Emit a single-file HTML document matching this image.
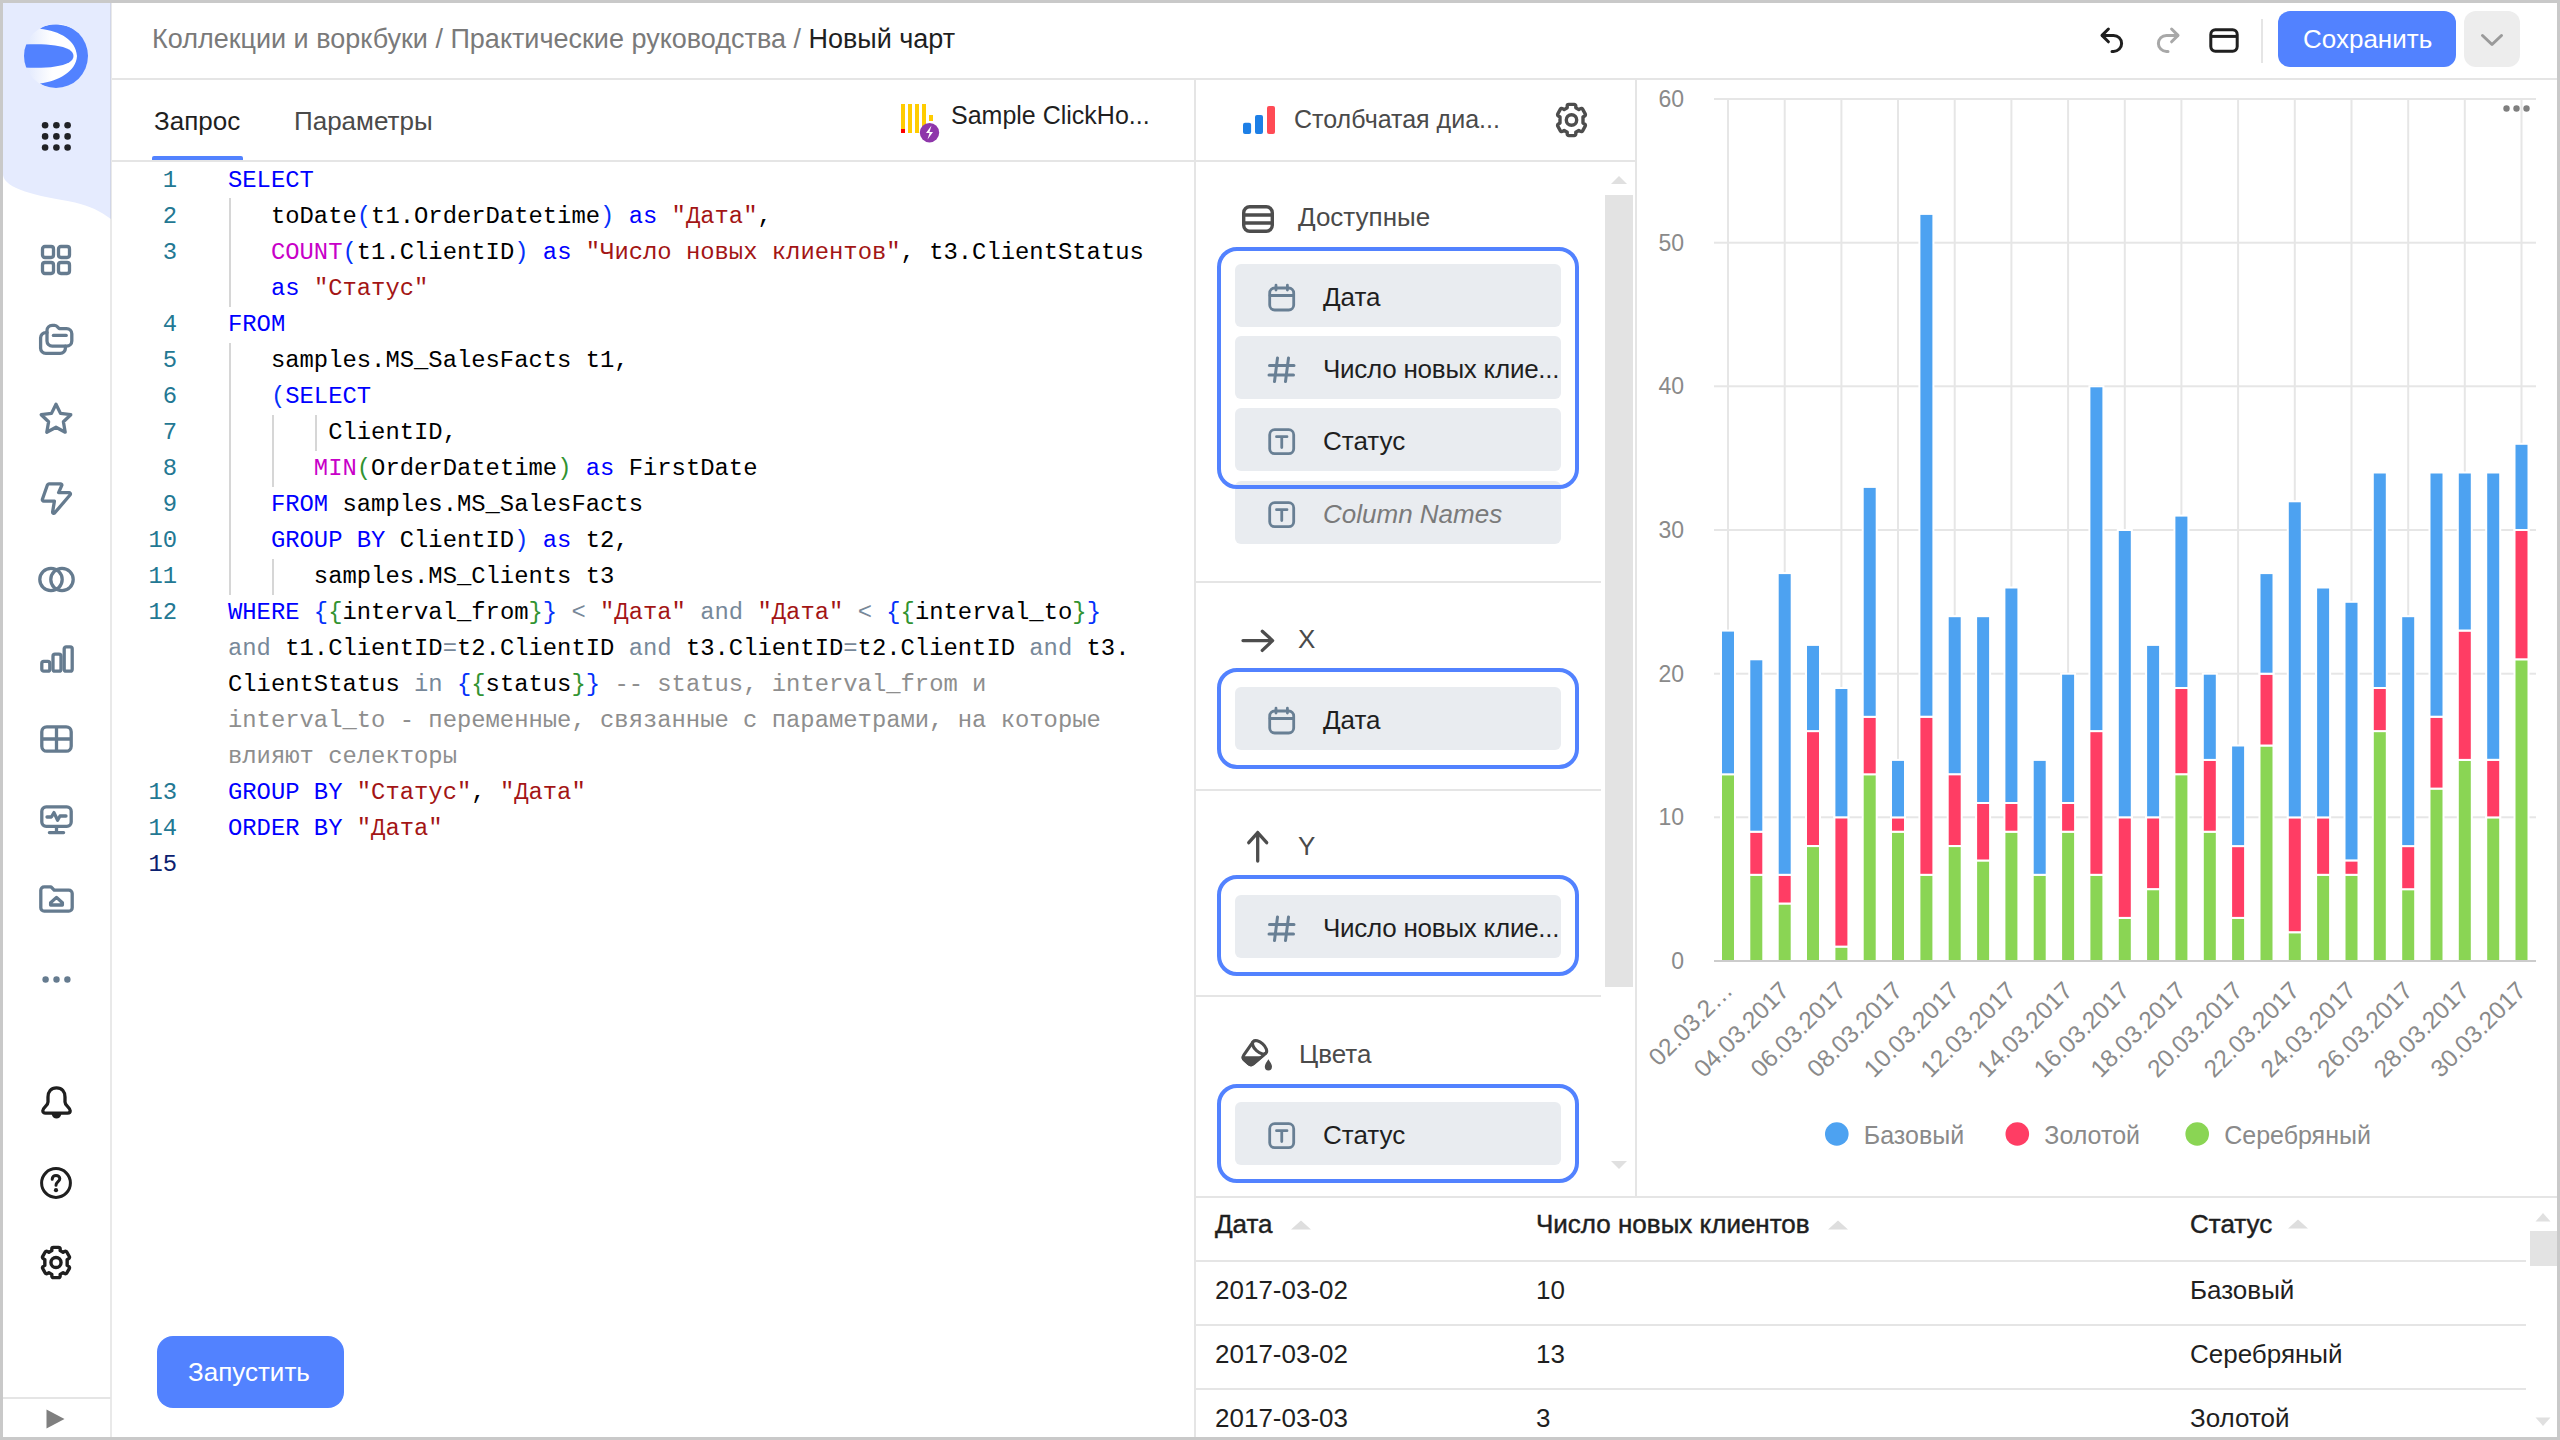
<!DOCTYPE html>
<html><head><meta charset="utf-8">
<style>
*{box-sizing:border-box;margin:0;padding:0}
html,body{width:2560px;height:1440px;overflow:hidden;background:#c9c9c9;font-family:"Liberation Sans",sans-serif;color:#1f1f1f}
#app{position:absolute;left:3px;top:3px;width:2554px;height:1434px;background:#fff;overflow:hidden}
.a{position:absolute}
.t{position:absolute;white-space:pre;line-height:1}
.ln{position:absolute;background:#e5e5e5}
svg{position:absolute;overflow:visible}
#code i{font-style:normal}
#code .k{color:#0000ff}#code .f{color:#c800c8}#code .s{color:#a31515}#code .o{color:#778899}#code .c{color:#8e8e8e}#code .b1{color:#0431fa}#code .b2{color:#319331}
#gut .cur{font-weight:normal;color:#0b216f}
.item{position:absolute;left:1235px;width:326px;height:63px;background:#e9ecf0;border-radius:6px}
.item .ic{position:absolute;left:33px;top:20px;width:28px;height:28px;overflow:visible}
.item span{position:absolute;left:88px;top:20px;font-size:26px;line-height:26px;white-space:pre;color:#1f1f1f}
#chart text{font-family:"Liberation Sans",sans-serif;fill:#8a8a8a}
#chart .yl{font-size:23px}#chart .xl{font-size:24.5px}#chart .lg{font-size:25px}
.th{font-size:26px;color:#1f1f1f;-webkit-text-stroke:0.45px #1f1f1f}
.td{font-size:26px;color:#1f1f1f}
</style></head><body>
<svg width="0" height="0" style="position:absolute">
<defs>
<g id="i-cal" fill="none" stroke="#687f94" stroke-width="2.8" stroke-linecap="round" stroke-linejoin="round"><rect x="1.7" y="4" width="24" height="22" rx="5"/><path d="M2 11.5 H25.5 M8 1.2 V6 M19.4 1.2 V6"/></g>
<g id="i-hash" fill="none" stroke="#687f94" stroke-width="3" stroke-linecap="round"><path d="M9.5 2 L6.5 25.5 M20.5 2 L17.5 25.5 M1.5 9.5 H26 M1 19 H25.5"/></g>
<g id="i-t" fill="none" stroke="#687f94" stroke-width="2.8" stroke-linejoin="round"><rect x="1.7" y="1.7" width="24" height="24" rx="5"/><path d="M8.5 8.7 H19 M13.75 8.7 V19.5" stroke-linecap="round" stroke-width="2.8"/></g>
</defs></svg>
<div id="app"></div>
<!-- all coordinates below are page coordinates -->
<div class="a" style="left:0;top:0;width:2560px;height:1440px">

<!-- SIDEBAR -->
<svg style="left:0;top:0" width="112" height="1440">
  <path d="M3 3 H111 V219 C100 211 90 206 75 202.5 C55 198.5 38 196 25 191.5 C12 187 4 182 3 175 Z" fill="#e5ebfe"/>
</svg>
<div class="ln" style="left:110px;top:3px;width:2px;height:1434px;background:rgba(0,0,0,0.085)"></div>
<!-- logo -->
<svg style="left:24px;top:24px" width="64" height="64" viewBox="0 0 64 64">
  <defs>
    <linearGradient id="lg" x1="0" y1="0" x2="1" y2="0">
      <stop offset="0" stop-color="#dfe7fd"/><stop offset="0.45" stop-color="#ffffff"/>
    </linearGradient>
    <clipPath id="lc"><circle cx="32" cy="32" r="32"/></clipPath>
  </defs>
  <circle cx="32" cy="32" r="32" fill="url(#lg)"/>
  <g clip-path="url(#lc)" fill="#5282ff">
    <path d="M16 4.75 C22 -1 42 -2 54 8 C70 22 68 48 52 60 C42 67 24 66 16 59.5 C34 57 52 48 53 32 C52 16 36 7 16 4.75 Z"/>
    <path d="M-2 20.6 C18 19.5 36 20.5 45 25.5 C51 29 51 35 45 38.5 C36 43.5 18 44.5 -2 43.4 Z"/>
  </g>
</svg>
<!-- apps dots -->
<svg style="left:40px;top:120px" width="33" height="33" viewBox="0 0 33 33" fill="#202226">
  <circle cx="5.1" cy="5.3" r="3.3"/><circle cx="16.4" cy="5.3" r="3.3"/><circle cx="27.6" cy="5.3" r="3.3"/>
  <circle cx="5.1" cy="16.4" r="3.3"/><circle cx="16.4" cy="16.4" r="3.3"/><circle cx="27.6" cy="16.4" r="3.3"/>
  <circle cx="5.1" cy="27.5" r="3.3"/><circle cx="16.4" cy="27.5" r="3.3"/><circle cx="27.6" cy="27.5" r="3.3"/>
</svg>
<!-- nav icons -->
<g></g>
<svg style="left:40px;top:244px" width="32" height="32" viewBox="0 0 16 16" fill="none" stroke="#657b8f" stroke-width="1.65" stroke-linejoin="round">
  <rect x="1.25" y="1.25" width="5.5" height="5.5" rx="1.2"/><rect x="9.25" y="1.25" width="5.5" height="5.5" rx="1.2"/>
  <rect x="1.25" y="9.25" width="5.5" height="5.5" rx="1.2"/><rect x="9.25" y="9.25" width="5.5" height="5.5" rx="1.2"/>
</svg>
<svg style="left:39px;top:323px" width="35" height="33" viewBox="0 0 17.5 16.5" fill="none" stroke="#657b8f" stroke-width="1.65" stroke-linejoin="round" stroke-linecap="round">
  <path d="M4 3.8 A2.6 2.6 0 0 1 6.6 1.2 H7.8 C8.6 1.2 9 1.6 9.5 2.2 L10.1 2.8 H13.8 A2.6 2.6 0 0 1 16.4 5.4 V9 A2.6 2.6 0 0 1 13.8 11.6 H6.6 A2.6 2.6 0 0 1 4 9 Z"/>
  <path d="M4 4.8 H3.4 A2.6 2.6 0 0 0 0.8 7.4 V12.6 A2.6 2.6 0 0 0 3.4 15.2 H10.6 A2.6 2.6 0 0 0 13.2 12.6 V11.6"/>
  <path d="M7.2 6.2 H13.6"/>
</svg>
<svg style="left:39px;top:402px" width="34" height="34" viewBox="0 0 17 17" fill="none" stroke="#657b8f" stroke-width="1.65" stroke-linejoin="round">
  <path d="M8.5 1.1 L10.75 5.7 L15.9 6.35 L12.2 9.9 L13.1 15.1 L8.5 12.6 L3.9 15.1 L4.8 9.9 L1.1 6.35 L6.25 5.7 Z"/>
</svg>
<svg style="left:40px;top:482px" width="33" height="34" viewBox="0 0 16.5 17" fill="none" stroke="#657b8f" stroke-width="1.65" stroke-linejoin="round">
  <path d="M4.5 0.9 H10.4 A0.6 0.6 0 0 1 10.9 1.7 L9.3 5.3 H14.6 A0.7 0.7 0 0 1 15.1 6.4 L7.3 15.5 A0.6 0.6 0 0 1 6.3 15 L7.2 9.6 H1.9 A0.8 0.8 0 0 1 1.2 8.6 L3.7 1.5 A0.9 0.9 0 0 1 4.5 0.9 Z"/>
</svg>
<svg style="left:38px;top:566px" width="37" height="27" viewBox="0 0 18.5 13.5" fill="none" stroke="#657b8f" stroke-width="1.65">
  <circle cx="6.5" cy="6.75" r="5.6"/><circle cx="12" cy="6.75" r="5.6"/>
</svg>
<svg style="left:40px;top:645px" width="34" height="28" viewBox="0 0 17 14" fill="none" stroke="#657b8f" stroke-width="1.65" stroke-linejoin="round">
  <rect x="0.9" y="8.2" width="4" height="4.9" rx="1"/><rect x="6.5" y="4.6" width="4" height="8.5" rx="1"/><rect x="12.1" y="0.9" width="4" height="12.2" rx="1"/>
</svg>
<svg style="left:40px;top:725px" width="33" height="28" viewBox="0 0 16.5 14" fill="none" stroke="#657b8f" stroke-width="1.65">
  <rect x="0.9" y="0.9" width="14.7" height="12.2" rx="2.5"/><path d="M8.25 1 V13 M1 7 H15.5"/>
</svg>
<svg style="left:40px;top:805px" width="33" height="30" viewBox="0 0 16.5 15" fill="none" stroke="#657b8f" stroke-width="1.65" stroke-linejoin="round" stroke-linecap="round">
  <rect x="0.9" y="0.9" width="14.7" height="9.8" rx="2.2"/><path d="M3.5 6 H5.7 L7 3.8 L8.8 7.6 L10 5.5 H13"/><path d="M8.25 10.8 V13.8 M4.7 13.8 H11.8"/>
</svg>
<svg style="left:39px;top:885px" width="35" height="28" viewBox="0 0 17.5 14" fill="none" stroke="#657b8f" stroke-width="1.65" stroke-linejoin="round">
  <path d="M0.9 2.6 A1.7 1.7 0 0 1 2.6 0.9 H6 L7.6 2.6 H14.9 A1.7 1.7 0 0 1 16.6 4.3 V11.4 A1.7 1.7 0 0 1 14.9 13.1 H2.6 A1.7 1.7 0 0 1 0.9 11.4 Z"/>
  <path d="M5.8 10 V8.9 L8.75 6.2 L11.7 8.9 V10 Z"/>
</svg>
<svg style="left:41px;top:974px" width="31" height="11" viewBox="0 0 31 11" fill="#657b8f">
  <circle cx="4.6" cy="5.5" r="3.2"/><circle cx="15.5" cy="5.5" r="3.2"/><circle cx="26.4" cy="5.5" r="3.2"/>
</svg>
<!-- bottom icons -->
<svg style="left:41px;top:1086px" width="31" height="33" viewBox="0 0 15.5 16.5" fill="none" stroke="#1f1f1f" stroke-width="1.65" stroke-linejoin="round">
  <path d="M7.75 0.9 C10.6 0.9 12 3 12 5.5 V8 C12 10 14.6 10.6 14.6 12.4 C14.6 13.2 14 13.6 13.3 13.6 H2.2 C1.5 13.6 0.9 13.2 0.9 12.4 C0.9 10.6 3.5 10 3.5 8 V5.5 C3.5 3 4.9 0.9 7.75 0.9 Z"/>
  <path d="M6.2 14.2 A1.6 1.6 0 0 0 9.3 14.2 Z" fill="#1f1f1f"/>
</svg>
<svg style="left:40px;top:1167px" width="32" height="32" viewBox="0 0 16 16" fill="none" stroke="#1f1f1f" stroke-width="1.5" stroke-linecap="round">
  <circle cx="8" cy="8" r="7.2"/><path d="M6.1 6.1 C6.1 4.9 7 4.2 8 4.2 C9.1 4.2 9.9 4.9 9.9 5.9 C9.9 7.2 8 7.5 8 9.1"/><circle cx="8" cy="11.6" r="1.05" fill="#1f1f1f" stroke="none"/>
</svg>
<svg style="left:39px;top:1245px" width="34" height="35" viewBox="0 0 17.5 18" fill="none" stroke="#1f1f1f" stroke-width="1.75" stroke-linejoin="round">
  <path d="M7.4 1.2 H10.1 A0.8 0.8 0 0 1 10.9 2 V2.9 L12.4 3.8 L13.2 3.3 A0.8 0.8 0 0 1 14.3 3.6 L15.6 5.9 A0.8 0.8 0 0 1 15.3 7 L14.5 7.5 V10.5 L15.3 11 A0.8 0.8 0 0 1 15.6 12.1 L14.3 14.4 A0.8 0.8 0 0 1 13.2 14.7 L12.4 14.2 L10.9 15.1 V16 A0.8 0.8 0 0 1 10.1 16.8 H7.4 A0.8 0.8 0 0 1 6.6 16 V15.1 L5.1 14.2 L4.3 14.7 A0.8 0.8 0 0 1 3.2 14.4 L1.9 12.1 A0.8 0.8 0 0 1 2.2 11 L3 10.5 V7.5 L2.2 7 A0.8 0.8 0 0 1 1.9 5.9 L3.2 3.6 A0.8 0.8 0 0 1 4.3 3.3 L5.1 3.8 L6.6 2.9 V2 A0.8 0.8 0 0 1 7.4 1.2 Z"/>
  <circle cx="8.75" cy="9" r="2.6"/>
</svg>
<svg style="left:46px;top:1409px" width="19" height="20" viewBox="0 0 19 20" fill="#7f7f7f"><path d="M0.5 0.5 L18.5 10 L0.5 19.5 Z"/></svg>
<div class="ln" style="left:3px;top:1397px;width:108px;height:2px"></div>

<!-- HEADER -->
<div class="ln" style="left:112px;top:78px;width:2445px;height:2px"></div>
<svg style="left:2100px;top:27px" width="24" height="26" viewBox="0 0 12 13" fill="none" stroke="#1f1f1f" stroke-width="1.5" stroke-linecap="round" stroke-linejoin="round">
  <path d="M4.2 1 L1 4.2 L4.2 7.4"/><path d="M1.2 4.2 H6.8 A4 4 0 0 1 6.8 12.2 H6"/>
</svg>
<svg style="left:2156px;top:27px" width="24" height="26" viewBox="0 0 12 13" fill="none" stroke="#a8a8a8" stroke-width="1.5" stroke-linecap="round" stroke-linejoin="round">
  <path d="M7.8 1 L11 4.2 L7.8 7.4"/><path d="M10.8 4.2 H5.2 A4 4 0 0 0 5.2 12.2 H6"/>
</svg>
<svg style="left:2209px;top:28px" width="30" height="25" viewBox="0 0 15 12.5" fill="none" stroke="#1f1f1f" stroke-width="1.5">
  <rect x="0.9" y="0.9" width="13.2" height="10.7" rx="2.3"/><path d="M1 4.2 H14"/>
</svg>
<div class="ln" style="left:2261px;top:19px;width:2px;height:44px"></div>
<div class="a" style="left:2278px;top:11px;width:178px;height:56px;background:#5282ff;border-radius:12px"></div>
<div class="t" style="left:2303px;top:26px;font-size:26px;color:#fff">Сохранить</div>
<div class="a" style="left:2464px;top:11px;width:56px;height:56px;background:#ededed;border-radius:12px"></div>
<svg style="left:2481px;top:34px" width="22" height="12" viewBox="0 0 22 12" fill="none" stroke="#9a9a9a" stroke-width="3" stroke-linecap="round" stroke-linejoin="round"><path d="M1.5 1.5 L11 10.5 L20.5 1.5"/></svg>
<div class="t" id="bc" style="left:152px;top:26px;font-size:27px;color:#7a7a7a">Коллекции и воркбуки / Практические руководства / <span style="color:#1f1f1f">Новый чарт</span></div>

<!-- EDITOR PANEL -->
<div class="ln" style="left:112px;top:160px;width:1082px;height:2px"></div>
<div class="a" style="left:152px;top:156px;width:91px;height:4px;background:#5282ff;border-radius:2px 2px 0 0"></div>
<div class="t" style="left:154px;top:108px;font-size:26px;color:#1f1f1f">Запрос</div>
<div class="t" style="left:294px;top:108px;font-size:26px;color:#4a4a4a">Параметры</div>
<svg style="left:900px;top:103px" width="40" height="40" viewBox="0 0 40 40">
  <g fill="#ffcc00"><rect x="1" y="1" width="4" height="29"/><rect x="8" y="1" width="4" height="29"/><rect x="15" y="1" width="4" height="29"/><rect x="22" y="1" width="4" height="29"/><rect x="29" y="12" width="4" height="6"/></g>
  <rect x="1" y="26" width="4" height="4" fill="#ff0000"/>
  <circle cx="29.5" cy="29.7" r="9.7" fill="#8e36aa"/>
  <path d="M31.5 22.5 L26 30 H29.5 L27.5 36.5 L33 29 H29.5 Z" fill="#fff"/>
</svg>
<div class="t" style="left:951px;top:103px;font-size:25px;color:#1f1f1f">Sample ClickHo...</div>
<div class="ln" style="left:1194px;top:80px;width:2px;height:1357px"></div>

<div class="ln" style="left:229px;top:198px;width:2px;height:109px;background:#d6d6d6"></div>
<div class="ln" style="left:229px;top:343px;width:2px;height:252px;background:#d6d6d6"></div>
<div class="ln" style="left:272px;top:415px;width:2px;height:72px;background:#d6d6d6"></div>
<div class="ln" style="left:272px;top:559px;width:2px;height:36px;background:#d6d6d6"></div>
<div class="ln" style="left:315px;top:415px;width:2px;height:36px;background:#d6d6d6"></div>
<div class="a" id="gut" style="left:112px;top:163px;width:65px;font-family:'Liberation Mono',monospace;font-size:23.85px;line-height:36px;color:#237893;text-align:right;white-space:pre">1
2
3

4
5
6
7
8
9
10
11
12




13
14
<b class="cur">15</b></div>
<div class="a" id="code" style="left:228px;top:163px;font-family:'Liberation Mono',monospace;font-size:23.85px;line-height:36px;color:#000;white-space:pre"><i class="k">SELECT</i>
   toDate<i class="b1">(</i>t1.OrderDatetime<i class="b1">)</i> <i class="k">as</i> <i class="s">"Дата"</i>,
   <i class="f">COUNT</i><i class="b1">(</i>t1.ClientID<i class="b1">)</i> <i class="k">as</i> <i class="s">"Число новых клиентов"</i>, t3.ClientStatus
   <i class="k">as</i> <i class="s">"Статус"</i>
<i class="k">FROM</i>
   samples.MS_SalesFacts t1,
   <i class="b1">(</i><i class="k">SELECT</i>
       ClientID,
      <i class="f">MIN</i><i class="b2">(</i>OrderDatetime<i class="b2">)</i> <i class="k">as</i> FirstDate
   <i class="k">FROM</i> samples.MS_SalesFacts
   <i class="k">GROUP BY</i> ClientID<i class="b1">)</i> <i class="k">as</i> t2,
      samples.MS_Clients t3
<i class="k">WHERE</i> <i class="b1">{</i><i class="b2">{</i>interval_from<i class="b2">}</i><i class="b1">}</i> <i class="o">&lt;</i> <i class="s">"Дата"</i> <i class="o">and</i> <i class="s">"Дата"</i> <i class="o">&lt;</i> <i class="b1">{</i><i class="b2">{</i>interval_to<i class="b2">}</i><i class="b1">}</i>
<i class="o">and</i> t1.ClientID<i class="o">=</i>t2.ClientID <i class="o">and</i> t3.ClientID<i class="o">=</i>t2.ClientID <i class="o">and</i> t3.
ClientStatus <i class="o">in</i> <i class="b1">{</i><i class="b2">{</i>status<i class="b2">}</i><i class="b1">}</i> <i class="c">-- status, interval_from и</i>
<i class="c">interval_to - переменные, связанные с параметрами, на которые</i>
<i class="c">влияют селекторы</i>
<i class="k">GROUP BY</i> <i class="s">"Статус"</i>, <i class="s">"Дата"</i>
<i class="k">ORDER BY</i> <i class="s">"Дата"</i>
</div>

<div class="a" style="left:157px;top:1336px;width:187px;height:72px;background:#5282ff;border-radius:16px"></div>
<div class="t" style="left:188px;top:1359px;font-size:26px;color:#fff">Запустить</div>

<!-- CHART -->
<svg id="chart" style="left:0;top:0" width="2560" height="1440" viewBox="0 0 2560 1440">
<rect x="1714" y="816.3" width="822" height="2" fill="#e6e6e6"/>
<rect x="1714" y="672.7" width="822" height="2" fill="#e6e6e6"/>
<rect x="1714" y="529.0" width="822" height="2" fill="#e6e6e6"/>
<rect x="1714" y="385.3" width="822" height="2" fill="#e6e6e6"/>
<rect x="1714" y="241.7" width="822" height="2" fill="#e6e6e6"/>
<rect x="1714" y="98.0" width="822" height="2" fill="#e6e6e6"/>
<rect x="1727.0" y="98.0" width="2" height="863.0" fill="#e6e6e6"/>
<rect x="1783.7" y="98.0" width="2" height="863.0" fill="#e6e6e6"/>
<rect x="1840.4" y="98.0" width="2" height="863.0" fill="#e6e6e6"/>
<rect x="1897.0" y="98.0" width="2" height="863.0" fill="#e6e6e6"/>
<rect x="1953.7" y="98.0" width="2" height="863.0" fill="#e6e6e6"/>
<rect x="2010.4" y="98.0" width="2" height="863.0" fill="#e6e6e6"/>
<rect x="2067.1" y="98.0" width="2" height="863.0" fill="#e6e6e6"/>
<rect x="2123.8" y="98.0" width="2" height="863.0" fill="#e6e6e6"/>
<rect x="2180.4" y="98.0" width="2" height="863.0" fill="#e6e6e6"/>
<rect x="2237.1" y="98.0" width="2" height="863.0" fill="#e6e6e6"/>
<rect x="2293.8" y="98.0" width="2" height="863.0" fill="#e6e6e6"/>
<rect x="2350.5" y="98.0" width="2" height="863.0" fill="#e6e6e6"/>
<rect x="2407.2" y="98.0" width="2" height="863.0" fill="#e6e6e6"/>
<rect x="2463.8" y="98.0" width="2" height="863.0" fill="#e6e6e6"/>
<rect x="2520.5" y="98.0" width="2" height="863.0" fill="#e6e6e6"/>
<rect x="1721.0" y="774.2" width="14" height="186.8" fill="#8ad554" stroke="#fff" stroke-width="2"/>
<rect x="1721.0" y="630.6" width="14" height="143.7" fill="#4da2f1" stroke="#fff" stroke-width="2"/>
<rect x="1749.3" y="874.8" width="14" height="86.2" fill="#8ad554" stroke="#fff" stroke-width="2"/>
<rect x="1749.3" y="831.7" width="14" height="43.1" fill="#ff3d64" stroke="#fff" stroke-width="2"/>
<rect x="1749.3" y="659.3" width="14" height="172.4" fill="#4da2f1" stroke="#fff" stroke-width="2"/>
<rect x="1777.7" y="903.5" width="14" height="57.5" fill="#8ad554" stroke="#fff" stroke-width="2"/>
<rect x="1777.7" y="874.8" width="14" height="28.7" fill="#ff3d64" stroke="#fff" stroke-width="2"/>
<rect x="1777.7" y="573.1" width="14" height="301.7" fill="#4da2f1" stroke="#fff" stroke-width="2"/>
<rect x="1806.0" y="846.1" width="14" height="114.9" fill="#8ad554" stroke="#fff" stroke-width="2"/>
<rect x="1806.0" y="731.1" width="14" height="114.9" fill="#ff3d64" stroke="#fff" stroke-width="2"/>
<rect x="1806.0" y="644.9" width="14" height="86.2" fill="#4da2f1" stroke="#fff" stroke-width="2"/>
<rect x="1834.4" y="946.6" width="14" height="14.4" fill="#8ad554" stroke="#fff" stroke-width="2"/>
<rect x="1834.4" y="817.3" width="14" height="129.3" fill="#ff3d64" stroke="#fff" stroke-width="2"/>
<rect x="1834.4" y="688.0" width="14" height="129.3" fill="#4da2f1" stroke="#fff" stroke-width="2"/>
<rect x="1862.7" y="774.2" width="14" height="186.8" fill="#8ad554" stroke="#fff" stroke-width="2"/>
<rect x="1862.7" y="716.8" width="14" height="57.5" fill="#ff3d64" stroke="#fff" stroke-width="2"/>
<rect x="1862.7" y="486.9" width="14" height="229.9" fill="#4da2f1" stroke="#fff" stroke-width="2"/>
<rect x="1891.0" y="831.7" width="14" height="129.3" fill="#8ad554" stroke="#fff" stroke-width="2"/>
<rect x="1891.0" y="817.3" width="14" height="14.4" fill="#ff3d64" stroke="#fff" stroke-width="2"/>
<rect x="1891.0" y="759.9" width="14" height="57.5" fill="#4da2f1" stroke="#fff" stroke-width="2"/>
<rect x="1919.4" y="874.8" width="14" height="86.2" fill="#8ad554" stroke="#fff" stroke-width="2"/>
<rect x="1919.4" y="716.8" width="14" height="158.0" fill="#ff3d64" stroke="#fff" stroke-width="2"/>
<rect x="1919.4" y="213.9" width="14" height="502.8" fill="#4da2f1" stroke="#fff" stroke-width="2"/>
<rect x="1947.7" y="846.1" width="14" height="114.9" fill="#8ad554" stroke="#fff" stroke-width="2"/>
<rect x="1947.7" y="774.2" width="14" height="71.8" fill="#ff3d64" stroke="#fff" stroke-width="2"/>
<rect x="1947.7" y="616.2" width="14" height="158.0" fill="#4da2f1" stroke="#fff" stroke-width="2"/>
<rect x="1976.1" y="860.4" width="14" height="100.6" fill="#8ad554" stroke="#fff" stroke-width="2"/>
<rect x="1976.1" y="803.0" width="14" height="57.5" fill="#ff3d64" stroke="#fff" stroke-width="2"/>
<rect x="1976.1" y="616.2" width="14" height="186.8" fill="#4da2f1" stroke="#fff" stroke-width="2"/>
<rect x="2004.4" y="831.7" width="14" height="129.3" fill="#8ad554" stroke="#fff" stroke-width="2"/>
<rect x="2004.4" y="803.0" width="14" height="28.7" fill="#ff3d64" stroke="#fff" stroke-width="2"/>
<rect x="2004.4" y="587.5" width="14" height="215.5" fill="#4da2f1" stroke="#fff" stroke-width="2"/>
<rect x="2032.7" y="874.8" width="14" height="86.2" fill="#8ad554" stroke="#fff" stroke-width="2"/>
<rect x="2032.7" y="759.9" width="14" height="114.9" fill="#4da2f1" stroke="#fff" stroke-width="2"/>
<rect x="2061.1" y="831.7" width="14" height="129.3" fill="#8ad554" stroke="#fff" stroke-width="2"/>
<rect x="2061.1" y="803.0" width="14" height="28.7" fill="#ff3d64" stroke="#fff" stroke-width="2"/>
<rect x="2061.1" y="673.7" width="14" height="129.3" fill="#4da2f1" stroke="#fff" stroke-width="2"/>
<rect x="2089.4" y="874.8" width="14" height="86.2" fill="#8ad554" stroke="#fff" stroke-width="2"/>
<rect x="2089.4" y="731.1" width="14" height="143.7" fill="#ff3d64" stroke="#fff" stroke-width="2"/>
<rect x="2089.4" y="386.3" width="14" height="344.8" fill="#4da2f1" stroke="#fff" stroke-width="2"/>
<rect x="2117.8" y="917.9" width="14" height="43.1" fill="#8ad554" stroke="#fff" stroke-width="2"/>
<rect x="2117.8" y="817.3" width="14" height="100.6" fill="#ff3d64" stroke="#fff" stroke-width="2"/>
<rect x="2117.8" y="530.0" width="14" height="287.3" fill="#4da2f1" stroke="#fff" stroke-width="2"/>
<rect x="2146.1" y="889.2" width="14" height="71.8" fill="#8ad554" stroke="#fff" stroke-width="2"/>
<rect x="2146.1" y="817.3" width="14" height="71.8" fill="#ff3d64" stroke="#fff" stroke-width="2"/>
<rect x="2146.1" y="644.9" width="14" height="172.4" fill="#4da2f1" stroke="#fff" stroke-width="2"/>
<rect x="2174.4" y="774.2" width="14" height="186.8" fill="#8ad554" stroke="#fff" stroke-width="2"/>
<rect x="2174.4" y="688.0" width="14" height="86.2" fill="#ff3d64" stroke="#fff" stroke-width="2"/>
<rect x="2174.4" y="515.6" width="14" height="172.4" fill="#4da2f1" stroke="#fff" stroke-width="2"/>
<rect x="2202.8" y="831.7" width="14" height="129.3" fill="#8ad554" stroke="#fff" stroke-width="2"/>
<rect x="2202.8" y="759.9" width="14" height="71.8" fill="#ff3d64" stroke="#fff" stroke-width="2"/>
<rect x="2202.8" y="673.7" width="14" height="86.2" fill="#4da2f1" stroke="#fff" stroke-width="2"/>
<rect x="2231.1" y="917.9" width="14" height="43.1" fill="#8ad554" stroke="#fff" stroke-width="2"/>
<rect x="2231.1" y="846.1" width="14" height="71.8" fill="#ff3d64" stroke="#fff" stroke-width="2"/>
<rect x="2231.1" y="745.5" width="14" height="100.6" fill="#4da2f1" stroke="#fff" stroke-width="2"/>
<rect x="2259.5" y="745.5" width="14" height="215.5" fill="#8ad554" stroke="#fff" stroke-width="2"/>
<rect x="2259.5" y="673.7" width="14" height="71.8" fill="#ff3d64" stroke="#fff" stroke-width="2"/>
<rect x="2259.5" y="573.1" width="14" height="100.6" fill="#4da2f1" stroke="#fff" stroke-width="2"/>
<rect x="2287.8" y="932.3" width="14" height="28.7" fill="#8ad554" stroke="#fff" stroke-width="2"/>
<rect x="2287.8" y="817.3" width="14" height="114.9" fill="#ff3d64" stroke="#fff" stroke-width="2"/>
<rect x="2287.8" y="501.3" width="14" height="316.1" fill="#4da2f1" stroke="#fff" stroke-width="2"/>
<rect x="2316.1" y="874.8" width="14" height="86.2" fill="#8ad554" stroke="#fff" stroke-width="2"/>
<rect x="2316.1" y="817.3" width="14" height="57.5" fill="#ff3d64" stroke="#fff" stroke-width="2"/>
<rect x="2316.1" y="587.5" width="14" height="229.9" fill="#4da2f1" stroke="#fff" stroke-width="2"/>
<rect x="2344.5" y="874.8" width="14" height="86.2" fill="#8ad554" stroke="#fff" stroke-width="2"/>
<rect x="2344.5" y="860.4" width="14" height="14.4" fill="#ff3d64" stroke="#fff" stroke-width="2"/>
<rect x="2344.5" y="601.8" width="14" height="258.6" fill="#4da2f1" stroke="#fff" stroke-width="2"/>
<rect x="2372.8" y="731.1" width="14" height="229.9" fill="#8ad554" stroke="#fff" stroke-width="2"/>
<rect x="2372.8" y="688.0" width="14" height="43.1" fill="#ff3d64" stroke="#fff" stroke-width="2"/>
<rect x="2372.8" y="472.5" width="14" height="215.5" fill="#4da2f1" stroke="#fff" stroke-width="2"/>
<rect x="2401.2" y="889.2" width="14" height="71.8" fill="#8ad554" stroke="#fff" stroke-width="2"/>
<rect x="2401.2" y="846.1" width="14" height="43.1" fill="#ff3d64" stroke="#fff" stroke-width="2"/>
<rect x="2401.2" y="616.2" width="14" height="229.9" fill="#4da2f1" stroke="#fff" stroke-width="2"/>
<rect x="2429.5" y="788.6" width="14" height="172.4" fill="#8ad554" stroke="#fff" stroke-width="2"/>
<rect x="2429.5" y="716.8" width="14" height="71.8" fill="#ff3d64" stroke="#fff" stroke-width="2"/>
<rect x="2429.5" y="472.5" width="14" height="244.2" fill="#4da2f1" stroke="#fff" stroke-width="2"/>
<rect x="2457.8" y="759.9" width="14" height="201.1" fill="#8ad554" stroke="#fff" stroke-width="2"/>
<rect x="2457.8" y="630.6" width="14" height="129.3" fill="#ff3d64" stroke="#fff" stroke-width="2"/>
<rect x="2457.8" y="472.5" width="14" height="158.0" fill="#4da2f1" stroke="#fff" stroke-width="2"/>
<rect x="2486.2" y="817.3" width="14" height="143.7" fill="#8ad554" stroke="#fff" stroke-width="2"/>
<rect x="2486.2" y="759.9" width="14" height="57.5" fill="#ff3d64" stroke="#fff" stroke-width="2"/>
<rect x="2486.2" y="472.5" width="14" height="287.3" fill="#4da2f1" stroke="#fff" stroke-width="2"/>
<rect x="2514.5" y="659.3" width="14" height="301.7" fill="#8ad554" stroke="#fff" stroke-width="2"/>
<rect x="2514.5" y="530.0" width="14" height="129.3" fill="#ff3d64" stroke="#fff" stroke-width="2"/>
<rect x="2514.5" y="443.8" width="14" height="86.2" fill="#4da2f1" stroke="#fff" stroke-width="2"/>
<rect x="1714" y="960.0" width="822" height="2" fill="#cccccc"/>
<text x="1684" y="969.0" text-anchor="end" class="yl">0</text>
<text x="1684" y="825.3" text-anchor="end" class="yl">10</text>
<text x="1684" y="681.7" text-anchor="end" class="yl">20</text>
<text x="1684" y="538.0" text-anchor="end" class="yl">30</text>
<text x="1684" y="394.3" text-anchor="end" class="yl">40</text>
<text x="1684" y="250.7" text-anchor="end" class="yl">50</text>
<text x="1684" y="107.0" text-anchor="end" class="yl">60</text>
<text x="1734.0" y="992" text-anchor="end" transform="rotate(-45 1734.0 992)" class="xl">02.03.2…</text>
<text x="1790.7" y="992" text-anchor="end" transform="rotate(-45 1790.7 992)" class="xl">04.03.2017</text>
<text x="1847.4" y="992" text-anchor="end" transform="rotate(-45 1847.4 992)" class="xl">06.03.2017</text>
<text x="1904.0" y="992" text-anchor="end" transform="rotate(-45 1904.0 992)" class="xl">08.03.2017</text>
<text x="1960.7" y="992" text-anchor="end" transform="rotate(-45 1960.7 992)" class="xl">10.03.2017</text>
<text x="2017.4" y="992" text-anchor="end" transform="rotate(-45 2017.4 992)" class="xl">12.03.2017</text>
<text x="2074.1" y="992" text-anchor="end" transform="rotate(-45 2074.1 992)" class="xl">14.03.2017</text>
<text x="2130.8" y="992" text-anchor="end" transform="rotate(-45 2130.8 992)" class="xl">16.03.2017</text>
<text x="2187.4" y="992" text-anchor="end" transform="rotate(-45 2187.4 992)" class="xl">18.03.2017</text>
<text x="2244.1" y="992" text-anchor="end" transform="rotate(-45 2244.1 992)" class="xl">20.03.2017</text>
<text x="2300.8" y="992" text-anchor="end" transform="rotate(-45 2300.8 992)" class="xl">22.03.2017</text>
<text x="2357.5" y="992" text-anchor="end" transform="rotate(-45 2357.5 992)" class="xl">24.03.2017</text>
<text x="2414.2" y="992" text-anchor="end" transform="rotate(-45 2414.2 992)" class="xl">26.03.2017</text>
<text x="2470.8" y="992" text-anchor="end" transform="rotate(-45 2470.8 992)" class="xl">28.03.2017</text>
<text x="2527.5" y="992" text-anchor="end" transform="rotate(-45 2527.5 992)" class="xl">30.03.2017</text>
<circle cx="1836.8" cy="1134" r="11.8" fill="#4da2f1"/>
<text x="1863.8" y="1143.5" class="lg">Базовый</text>
<circle cx="2017.3" cy="1134" r="11.8" fill="#ff3d64"/>
<text x="2044.3" y="1143.5" class="lg">Золотой</text>
<circle cx="2197.2" cy="1134" r="11.8" fill="#8ad554"/>
<text x="2224.2" y="1143.5" class="lg">Серебряный</text>
<circle cx="2506.5" cy="108.5" r="3.2" fill="#7f7f7f"/>
<circle cx="2516.5" cy="108.5" r="3.2" fill="#7f7f7f"/>
<circle cx="2526.5" cy="108.5" r="3.2" fill="#7f7f7f"/>
</svg>
<!-- MIDDLE PANEL -->
<div class="ln" style="left:1196px;top:160px;width:440px;height:2px"></div>
<div class="ln" style="left:1635px;top:80px;width:2px;height:1117px"></div>
<div class="ln" style="left:1196px;top:1196px;width:1361px;height:2px"></div>
<svg style="left:1243px;top:106px" width="32" height="28" viewBox="0 0 32 28">
  <rect x="0" y="16.8" width="8.1" height="11.2" rx="2" fill="#1d7fe6"/><rect x="12" y="9" width="8" height="19" rx="2" fill="#1d7fe6"/><rect x="24" y="0" width="8" height="28" rx="2" fill="#ff4b55"/>
</svg>
<div class="t" style="left:1294px;top:107px;font-size:25px;color:#4a4a4a">Столбчатая диа...</div>
<svg style="left:1554px;top:102px" width="35" height="36" viewBox="0 0 17.5 18" fill="none" stroke="#4d4d4d" stroke-width="1.7" stroke-linejoin="round">
  <path d="M7.4 1.2 H10.1 A0.8 0.8 0 0 1 10.9 2 V2.9 L12.4 3.8 L13.2 3.3 A0.8 0.8 0 0 1 14.3 3.6 L15.6 5.9 A0.8 0.8 0 0 1 15.3 7 L14.5 7.5 V10.5 L15.3 11 A0.8 0.8 0 0 1 15.6 12.1 L14.3 14.4 A0.8 0.8 0 0 1 13.2 14.7 L12.4 14.2 L10.9 15.1 V16 A0.8 0.8 0 0 1 10.1 16.8 H7.4 A0.8 0.8 0 0 1 6.6 16 V15.1 L5.1 14.2 L4.3 14.7 A0.8 0.8 0 0 1 3.2 14.4 L1.9 12.1 A0.8 0.8 0 0 1 2.2 11 L3 10.5 V7.5 L2.2 7 A0.8 0.8 0 0 1 1.9 5.9 L3.2 3.6 A0.8 0.8 0 0 1 4.3 3.3 L5.1 3.8 L6.6 2.9 V2 A0.8 0.8 0 0 1 7.4 1.2 Z"/>
  <circle cx="8.75" cy="9" r="2.6"/>
</svg>
<!-- scrollbar -->
<svg style="left:1610px;top:175px" width="18" height="10"><path d="M1 9 L9 1 L17 9 Z" fill="#e0e0e0"/></svg>
<div class="a" style="left:1605px;top:195px;width:28px;height:792px;background:#e3e3e3"></div>
<svg style="left:1610px;top:1160px" width="18" height="10"><path d="M1 1 L9 9 L17 1 Z" fill="#e0e0e0"/></svg>

<!-- Доступные -->
<svg style="left:1242px;top:205px" width="32" height="28" viewBox="0 0 32 28" fill="none" stroke="#4d4d4d" stroke-width="3.4">
  <rect x="1.7" y="1.7" width="28.6" height="24.6" rx="6"/><path d="M2 10 H30 M2 18 H30"/>
</svg>
<div class="t" style="left:1298px;top:204px;font-size:26px;color:#4a4a4a">Доступные</div>
<div class="item" style="top:264px"><svg class="ic"><use href="#i-cal"/></svg><span>Дата</span></div>
<div class="item" style="top:336px"><svg class="ic"><use href="#i-hash"/></svg><span style="letter-spacing:-0.25px">Число новых клие...</span></div>
<div class="item" style="top:408px"><svg class="ic"><use href="#i-t"/></svg><span>Статус</span></div>
<div class="item" style="top:481px"><svg class="ic"><use href="#i-t"/></svg><span style="font-style:italic;color:#7a7a7a">Column Names</span></div>
<div class="a" style="left:1217px;top:247px;width:362px;height:242px;border:4px solid #5282ff;border-radius:20px"></div>
<div class="ln" style="left:1196px;top:581px;width:405px;height:2px"></div>

<!-- X -->
<svg style="left:1240px;top:628px" width="36" height="25" viewBox="0 0 36 25" fill="none" stroke="#4d4d4d" stroke-width="3.3" stroke-linecap="round" stroke-linejoin="round">
  <path d="M3 12.6 H32.5 M22.3 3.3 L32.6 12.6 L22.3 22.4"/>
</svg>
<div class="t" style="left:1298px;top:626px;font-size:26px;color:#4a4a4a">X</div>
<div class="a" style="left:1217px;top:668px;width:362px;height:101px;border:4px solid #5282ff;border-radius:20px"></div>
<div class="item" style="top:687px"><svg class="ic"><use href="#i-cal"/></svg><span>Дата</span></div>
<div class="ln" style="left:1196px;top:789px;width:405px;height:2px"></div>

<!-- Y -->
<svg style="left:1245px;top:830px" width="25" height="34" viewBox="0 0 25 34" fill="none" stroke="#4d4d4d" stroke-width="3.3" stroke-linecap="round" stroke-linejoin="round">
  <path d="M12.7 2.5 V31 M3.75 12.7 L12.7 2.6 L21.7 12.7"/>
</svg>
<div class="t" style="left:1298px;top:833px;font-size:26px;color:#4a4a4a">Y</div>
<div class="a" style="left:1217px;top:875px;width:362px;height:101px;border:4px solid #5282ff;border-radius:20px"></div>
<div class="item" style="top:895px"><svg class="ic"><use href="#i-hash"/></svg><span style="letter-spacing:-0.25px">Число новых клие...</span></div>
<div class="ln" style="left:1196px;top:995px;width:405px;height:2px"></div>

<!-- Цвета -->
<svg style="left:1240px;top:1037px" width="34" height="35" viewBox="0 0 34 35">
  <defs><clipPath id="liq"><rect x="0" y="19.3" width="34" height="16"/></clipPath></defs>
  <g transform="translate(19.6 10.3) rotate(42)">
    <path d="M -10 0 L -7.5 17 Q -7 21 -3 21 H 3 Q 7 21 7.5 17 L 10 0 Z" fill="#4d4d4d" clip-path="url(#liq)" transform="rotate(-42) translate(-19.6 -10.3)" style="display:none"/>
  </g>
  <g clip-path="url(#liq)"><g transform="translate(19.6 10.3) rotate(42)"><path d="M -10 0 L -7.5 17 Q -7 21 -3 21 H 3 Q 7 21 7.5 17 L 10 0 Z" fill="#4d4d4d"/></g></g>
  <g transform="translate(19.6 10.3) rotate(42)" fill="none" stroke="#4d4d4d" stroke-width="3.1" stroke-linejoin="round">
    <ellipse cx="0" cy="0" rx="8.6" ry="4.6"/>
    <path d="M -8.6 0 L -6.5 16.5 Q -6 19.5 -3 19.5 H 3 Q 6 19.5 6.5 16.5 L 8.6 0"/>
  </g>
  <path d="M28.4 22.3 C30 24.8 32 27.3 32 29.8 A3.6 3.6 0 0 1 24.8 29.8 C24.8 27.3 26.8 24.8 28.4 22.3 Z" fill="#4d4d4d"/>
</svg>
<div class="t" style="left:1299px;top:1041px;font-size:26px;color:#4a4a4a">Цвета</div>
<div class="a" style="left:1217px;top:1084px;width:362px;height:99px;border:4px solid #5282ff;border-radius:20px"></div>
<div class="item" style="top:1102px"><svg class="ic"><use href="#i-t"/></svg><span>Статус</span></div>

<!-- TABLE -->
<div class="ln" style="left:1196px;top:1260px;width:1330px;height:2px"></div>
<div class="ln" style="left:1196px;top:1324px;width:1330px;height:2px"></div>
<div class="ln" style="left:1196px;top:1388px;width:1330px;height:2px"></div>
<div class="t th" style="left:1215px;top:1211px">Дата</div>
<div class="t th" style="left:1536px;top:1211px">Число новых клиентов</div>
<div class="t th" style="left:2190px;top:1211px">Статус</div>
<svg style="left:1290px;top:1220px" width="22" height="10"><path d="M1 9.5 L11 0.5 L21 9.5 Z" fill="#dedede"/></svg>
<svg style="left:1827px;top:1220px" width="22" height="10"><path d="M1 9.5 L11 0.5 L21 9.5 Z" fill="#dedede"/></svg>
<svg style="left:2287px;top:1219px" width="22" height="10"><path d="M1 9.5 L11 0.5 L21 9.5 Z" fill="#dedede"/></svg>
<div class="t td" style="left:1215px;top:1277px">2017-03-02</div>
<div class="t td" style="left:1536px;top:1277px">10</div>
<div class="t td" style="left:2190px;top:1277px">Базовый</div>
<div class="t td" style="left:1215px;top:1341px">2017-03-02</div>
<div class="t td" style="left:1536px;top:1341px">13</div>
<div class="t td" style="left:2190px;top:1341px">Серебряный</div>
<div class="t td" style="left:1215px;top:1405px">2017-03-03</div>
<div class="t td" style="left:1536px;top:1405px">3</div>
<div class="t td" style="left:2190px;top:1405px">Золотой</div>
<svg style="left:2535px;top:1212px" width="16" height="10"><path d="M0.5 9.5 L8 1 L15.5 9.5 Z" fill="#e0e0e0"/></svg>
<div class="a" style="left:2530px;top:1231px;width:27px;height:35px;background:#e3e3e3"></div>
<svg style="left:2535px;top:1417px" width="16" height="10"><path d="M0.5 0.5 L8 9 L15.5 0.5 Z" fill="#e0e0e0"/></svg>

</div>
</body></html>
